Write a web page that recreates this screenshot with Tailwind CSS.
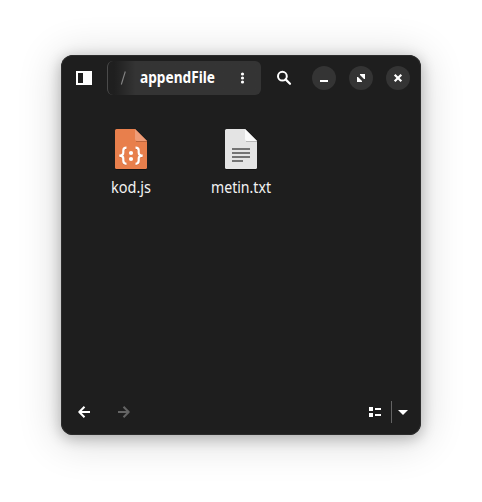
<!DOCTYPE html>
<html lang="tr">
<head>
<meta charset="utf-8">
<title>appendFile</title>
<script src="https://cdn.jsdelivr.net/npm/@tailwindcss/browser@4"></script>
</head>
<body class="h-[502px] overflow-hidden bg-white pl-[61px] pt-[55px] font-['Noto_Sans',sans-serif] text-white">
<main class="flex h-[380px] w-[360px] flex-col rounded-xl bg-[#1e1e1e] shadow-[0_3px_14px_1px_rgba(0,0,0,0.24),0_4px_40px_5px_rgba(0,0,0,0.14),inset_0_0_0_1px_#2c2c2c]">
  <header class="flex h-[46px] items-center pl-[15px] pr-[11px]">
    <button class="h-[14px] w-4" aria-label="Kenar çubuğu">
      <svg class="block" width="16" height="14"><path fill="#fff" fill-rule="evenodd" d="M0 0H16V14H0ZM2 2V12H7V2Z"/></svg>
    </button>
    <div class="ml-[15px] flex h-[34px] w-[154px] items-center rounded-md border-l border-[#4b4b4b] bg-linear-to-r from-[#1f1f1f] from-4% to-[#343434] to-18%">
      <svg class="ml-3 block" width="8" height="20"><path d="M1.3 16.5 5.3 3.5" stroke="#858585" stroke-width="1.1"/></svg>
      <svg class="ml-3 block overflow-visible" width="75" height="22"><text x="0" y="16" textLength="75" lengthAdjust="spacingAndGlyphs" fill="#fff" font-size="15.5" font-weight="700">appendFile</text></svg>
      <svg class="ml-[25px] block" width="5" height="12" fill="#fff"><circle cx="2.5" cy="2" r="1.6"/><circle cx="2.5" cy="6" r="1.6"/><circle cx="2.5" cy="10" r="1.6"/></svg>
    </div>
    <svg class="ml-[15px] mr-px block" width="16" height="16" fill="none" stroke="#fff"><circle cx="6.4" cy="6.2" r="4.4" stroke-width="2"/><path d="M9.6 9.4 14 13.8" stroke-width="2.2" stroke-linecap="round"/></svg>
    <div class="ml-[19px] flex gap-[13px]">
      <button class="size-6 rounded-full bg-[#343434]" aria-label="Küçült"><svg class="block" width="24" height="24"><path d="M8 14H16V16H8Z" fill="#fff"/></svg></button>
      <button class="size-6 rounded-full bg-[#343434]" aria-label="Büyüt"><svg class="block" width="24" height="24" fill="#fff"><path d="M11 8H16V13H15L11 9ZM8 11H9L13 15V16H8Z"/></svg></button>
      <button class="size-6 rounded-full bg-[#343434]" aria-label="Kapat"><svg class="block" width="24" height="24"><path d="M8.7 8.7 15.3 15.3M15.3 8.7 8.7 15.3" stroke="#fff" stroke-width="2.2"/></svg></button>
    </div>
  </header>
  <section class="flex flex-1 items-start gap-[30px] pl-[30px] pt-7">
    <figure class="flex w-20 flex-col items-center">
      <svg class="block overflow-visible" width="32" height="41">
        <path d="M2 1H20L32 13V39Q32 41 30 41H2Q0 41 0 39V3Q0 1 2 1" fill="#111"/>
        <path d="M1.5 0H20L32 12V38.5Q32 40 30.5 40H1.5Q0 40 0 38.5V1.5Q0 0 1.5 0" fill="#e87f4c"/>
        <path d="M21 12.5H32" stroke="#bd663d"/>
        <path d="M20 0 32 12H22Q20 12 20 10Z" fill="#ef9c77"/>
        <g fill="none" stroke="#c96b40" stroke-width="2" transform="translate(0 .8)"><path d="M11.5 18.6Q8.3 18.6 8.3 21.5V23.5Q8.3 26.7 4.3 26.7 8.3 26.7 8.3 29.5V31.5Q8.3 34.8 11.5 34.8M20.5 18.6Q23.7 18.6 23.7 21.5V23.5Q23.7 26.7 27.7 26.7 23.7 26.7 23.7 29.5V31.5Q23.7 34.8 20.5 34.8"/></g>
        <g fill="none" stroke="#fff" stroke-width="2.2"><path d="M11.5 18.6Q8.3 18.6 8.3 21.5V23.5Q8.3 26.7 4.3 26.7 8.3 26.7 8.3 29.5V31.5Q8.3 34.8 11.5 34.8M20.5 18.6Q23.7 18.6 23.7 21.5V23.5Q23.7 26.7 27.7 26.7 23.7 26.7 23.7 29.5V31.5Q23.7 34.8 20.5 34.8"/></g>
        <circle cx="16" cy="24" r="2.1" fill="#fff"/><circle cx="16" cy="30" r="2.1" fill="#fff"/>
      </svg>
      <figcaption class="mt-[7px]"><svg class="block overflow-visible" width="40" height="22"><text x="0" y="16" textLength="40" lengthAdjust="spacingAndGlyphs" fill="#f2f2f2" font-size="15.5">kod.js</text></svg></figcaption>
    </figure>
    <figure class="flex w-20 flex-col items-center">
      <svg class="block overflow-visible" width="32" height="41">
        <path d="M2 1H20L32 13V39Q32 41 30 41H2Q0 41 0 39V3Q0 1 2 1" fill="#111"/>
        <path d="M1.5 0H20L32 12V38.5Q32 40 30.5 40H1.5Q0 40 0 38.5V1.5Q0 0 1.5 0" fill="#e4e4e4"/>
        <path d="M21 12.5H32" stroke="#b8b8b8"/>
        <path d="M20 0 32 12H22Q20 12 20 10Z" fill="#fafafa"/>
        <path d="M7 20H25M7 24H25M7 28H25M7 32H18" stroke="#737373" stroke-width="2"/>
      </svg>
      <figcaption class="mt-[7px]"><svg class="block overflow-visible" width="60" height="22"><text x="0" y="16" textLength="60" lengthAdjust="spacingAndGlyphs" fill="#f2f2f2" font-size="15.5">metin.txt</text></svg></figcaption>
    </figure>
  </section>
  <footer class="flex h-[46px] items-center pl-[17px] pr-[13px]">
    <svg class="block" width="12" height="12" fill="none" stroke="#fff" stroke-width="2" stroke-linejoin="round"><path d="M12 6H2M6.5 .7 1.3 6 6.5 11.3"/></svg>
    <svg class="ml-7 block" width="12" height="12" fill="none" stroke="#646464" stroke-width="2" stroke-linejoin="round"><path d="M0 6H10M5.5 .7 10.7 6 5.5 11.3"/></svg>
    <svg class="ml-auto block" width="12" height="10" fill="#fff"><path d="M0 0H4V4H0ZM6 1H12V3H6ZM0 6H4V10H0ZM6 7H12V9H6Z"/></svg>
    <div class="ml-[10px] h-[22px] w-px bg-[#646464]"></div>
    <svg class="ml-1.5 mt-px block" width="10" height="5"><path d="M0 0H10L5 5Z" fill="#fff"/></svg>
  </footer>
</main>
</body>
</html>
